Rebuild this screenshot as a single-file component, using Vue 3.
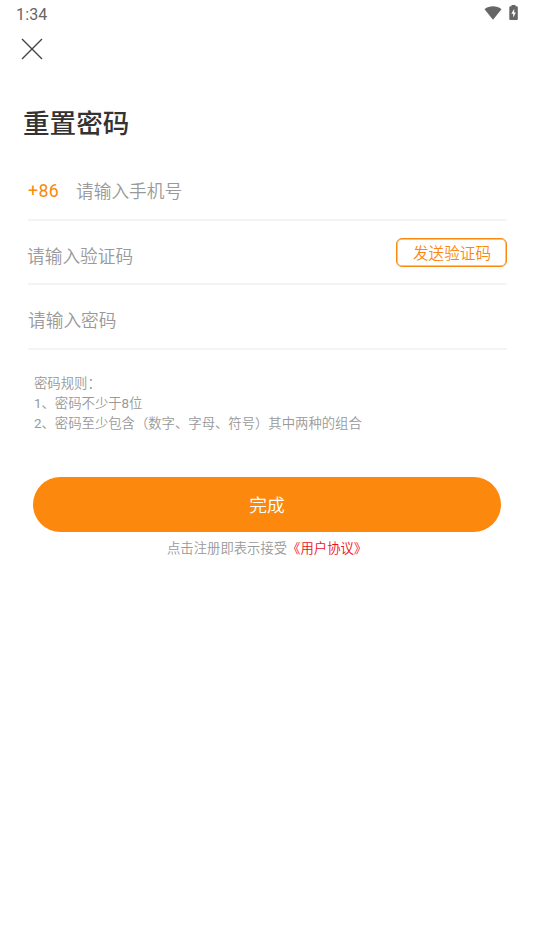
<template>
  <main class="screen">
    <header class="status">
      <span class="time">1:34</span>
      <div class="status-icons">
        <svg class="wifi" viewBox="0 0 18 14"><path d="M0.5 3.2C5.4-.6 12.6-.6 17.5 3.2L9 13.7Z" /></svg>
        <svg class="battery" viewBox="0 0 9 15"><path fill-rule="evenodd" d="M2.500 0h4v1.300h1.300q1 0 1 1v11.700q0 1-1 1H1.300q-1 0-1-1V2.300q0-1 1-1H2.500ZM5.200 3.700L2.300 8.700h1.900v3.800l2.700-5H5.200Z" /></svg>
      </div>
    </header>
    <nav class="nav">
      <svg class="close" viewBox="0 0 22 22"><path d="M1 1L21 21M21 1L1 21" /></svg>
    </nav>
    <h1>重置密码</h1>
    <form class="form" @submit.prevent>
      <div class="row phone"><span class="prefix">+86</span><span class="hint">请输入手机号</span></div>
      <div class="row code"><span class="hint">请输入验证码</span><button type="button" class="send">发送验证码</button></div>
      <div class="row password"><span class="hint">请输入密码</span></div>
    </form>
    <section class="rules">
      <p>密码规则：</p>
      <p><span class="digit">1</span>、密码不少于<span class="digit">8</span>位</p>
      <p><span class="digit">2</span>、密码至少包含（数字、字母、符号）其中两种的组合</p>
    </section>
    <button type="button" class="done">完成</button>
    <p class="terms">点击注册即表示接受<span class="link">《用户协议》</span></p>
  </main>
</template>

<script setup>
</script>

<style>
body { background: #fff; }
</style>

<style scoped>
.screen { height: 950px; overflow: hidden; background: #fff; font-family: Roboto, "Noto Sans CJK SC", sans-serif; font-weight: 350; }
.status { height: 28px; box-sizing: border-box; padding: 5px 16px 0; display: flex; justify-content: space-between; color: #666; }
.time { font-size: 16px; line-height: 19px; font-weight: 400; letter-spacing: 0.150px; }
.status-icons { display: flex; gap: 7px; }
.wifi { width: 18px; height: 14px; margin-top: 1px; fill: #666; }
.battery { width: 9px; height: 15px; fill: #666; }
.nav { height: 42px; padding: 10px 21px 0; box-sizing: border-box; }
.close { width: 22px; height: 22px; display: block; fill: none; stroke: #444; stroke-width: 1.400; }
h1 { margin: 33px 0 0 23px; font-size: 26.600px; line-height: 42px; font-weight: 500; color: #333; }
.form { margin: 11px 27px 0 28px; }
.row { height: 64.700px; box-sizing: border-box; border-bottom: 2px solid #f4f4f4; display: flex; align-items: center; font-size: 17.700px; color: #999; }
.phone { padding-top: 6px; }
.prefix { width: 48px; padding-top: 2px; font-weight: 400; letter-spacing: 0.400px; color: #fb880e; }
.digit { font-weight: 400; }
.code .hint { margin-left: -1px; padding-top: 5px; }
.password { padding-top: 5px; }
.send { margin-left: auto; width: 111px; height: 29px; padding: 4px 0 0 1px; border: 1px solid #fb880e; box-shadow: inset 0 0 0 0.500px #fb880e; border-radius: 6px; background: #fff; color: #fb880e; font: 350 15.600px/23px Roboto, "Noto Sans CJK SC", sans-serif; }
.rules { margin: 24px 0 0 34px; font-size: 13.350px; line-height: 20px; color: #999; }
.rules p { margin: 0; }
.done { display: block; width: 468px; height: 55px; margin: 43px 0 0 33px; padding: 2px 0 0; border: 0; border-radius: 28px; background: #fc890d; color: #fff; font: 350 17.800px/53px Roboto, "Noto Sans CJK SC", sans-serif; }
.terms { margin: 7px 0 0 167px; font-size: 13.350px; line-height: 20px; color: #999; }
.link { color: #ee101c; }
</style>
